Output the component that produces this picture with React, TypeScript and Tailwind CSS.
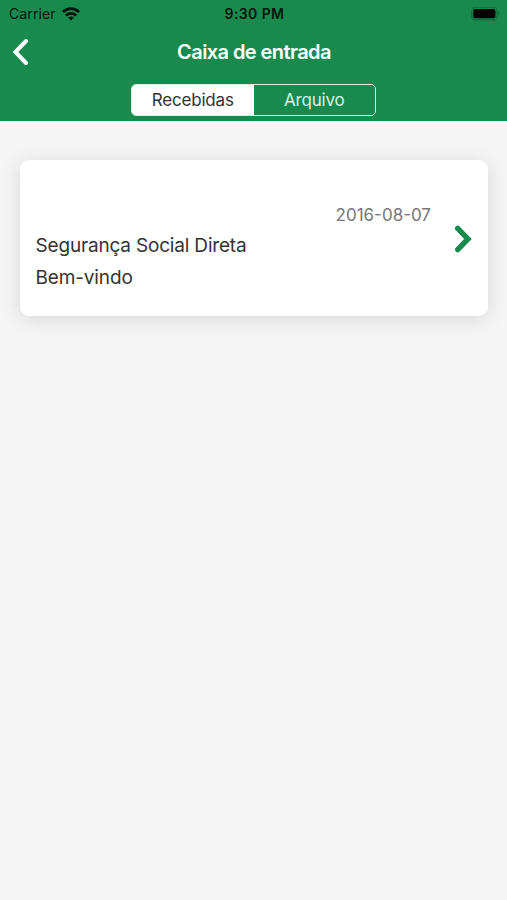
import { useState } from "react"

function WifiIcon() {
    return (
        <svg className="w-[18px] h-[14px]" viewBox="0 0 18 14" fill="none" stroke="#04150b" strokeWidth="2.8">
            <path d="M1 4.9C5.5 0.5 12.5 0.5 17 4.9" />
            <path d="M3.9 8.4C6.8 5.6 11.2 5.6 14.1 8.4" />
            <path d="M9 13.4L6.1 10.6C7.7 9.2 10.3 9.2 11.9 10.6Z" fill="#04150b" stroke="none" />
        </svg>
    )
}

function BatteryIcon() {
    return (
        <svg className="w-[29px] h-[14px]" viewBox="0 0 29 14" fill="none">
            <rect x="0.7" y="0.3" width="25.4" height="12.6" rx="3.6" stroke="#106b3c" strokeWidth="1.1" />
            <rect x="2.2" y="1.9" width="22.2" height="9.4" rx="2" fill="#000000" />
            <path d="M27.3 4.6C28.6 5.2 28.6 8 27.3 8.6Z" fill="#106b3c" />
        </svg>
    )
}

export default function App() {
    const tabs = ["Recebidas", "Arquivo"]
    const messages = [
        { date: "2016-08-07", sender: "Segurança Social Direta", subject: "Bem-vindo" },
    ]

    const [activeTab, setActiveTab] = useState("Recebidas")

    return (
        <div className="w-full h-screen bg-[#f5f5f5] flex flex-col overflow-hidden font-['Inter',sans-serif]">
            {/* Header */}
            <header className="h-[121px] shrink-0 bg-[#198a4e] flex flex-col">
                {/* Status bar */}
                <div className="h-7 grid grid-cols-3 items-center pl-[9px] pr-[7px] text-[#04150b]">
                    <div className="flex items-center gap-[6px] text-[14px] leading-7">
                        <span className="tracking-[0.1px]">Carrier</span>
                        <WifiIcon />
                    </div>
                    <p className="text-[14px] leading-7 font-semibold text-center tracking-[0.4px]">9:30 PM</p>
                    <div className="flex justify-end">
                        <BatteryIcon />
                    </div>
                </div>

                {/* Title */}
                <div className="h-12 grid grid-cols-[60px_1fr_60px] items-center">
                    <button aria-label="Voltar" className="pl-3">
                        <svg className="w-[17px] h-[28px]" viewBox="0 0 17 28" fill="none" stroke="#ffffff" strokeWidth="4" strokeLinecap="round">
                            <path d="M14 3L3.4 14L14 25" />
                        </svg>
                    </button>
                    <h1 className="pl-px text-[20px] leading-6 font-semibold text-white text-center tracking-[-0.57px]">Caixa de entrada</h1>
                </div>

                {/* Tabs */}
                <div className="mt-2 mx-auto w-[245px] h-8 flex rounded-[5px] border-[1.5px] border-[#d6f3e2] overflow-hidden">
                    {tabs.map((tab) => (
                        <button
                            key={tab}
                            onClick={() => setActiveTab(tab)}
                            className={`flex-1 text-[17px] leading-none tracking-[-0.2px] ${activeTab === tab
                                ? "bg-white text-[#333333]"
                                : "text-[#d6f3e2]"
                                }`}
                        >
                            {tab}
                        </button>
                    ))}
                </div>
            </header>

            {/* Messages */}
            <main className="flex-1 pt-[39px] pl-5 pr-[19px]">
                {messages.map((message, index) => (
                    <div key={index} className="h-[156px] bg-white rounded-[9px] shadow-[0_3px_20px_rgba(0,0,0,0.12)] flex items-center pl-[15px] pr-4">
                        <div className="flex-1 pt-[17px] text-[#333333]">
                            <p className="pr-[23px] text-right text-[17px] leading-[30px] text-[#777777]">{message.date}</p>
                            <p className="pl-[0.5px] text-[19px] leading-8 tracking-[-0.18px]">{message.sender}</p>
                            <p className="pl-[0.5px] text-[19px] leading-8 tracking-[-0.14px]">{message.subject}</p>
                        </div>
                        <svg className="w-[18px] h-[28px] mt-[2px]" viewBox="0 0 18 28" fill="none" stroke="#198a4e" strokeWidth="5.4" strokeLinecap="round">
                            <path d="M3.7 3.4L14 14L3.7 24.6" />
                        </svg>
                    </div>
                ))}
            </main>
        </div>
    )
}
